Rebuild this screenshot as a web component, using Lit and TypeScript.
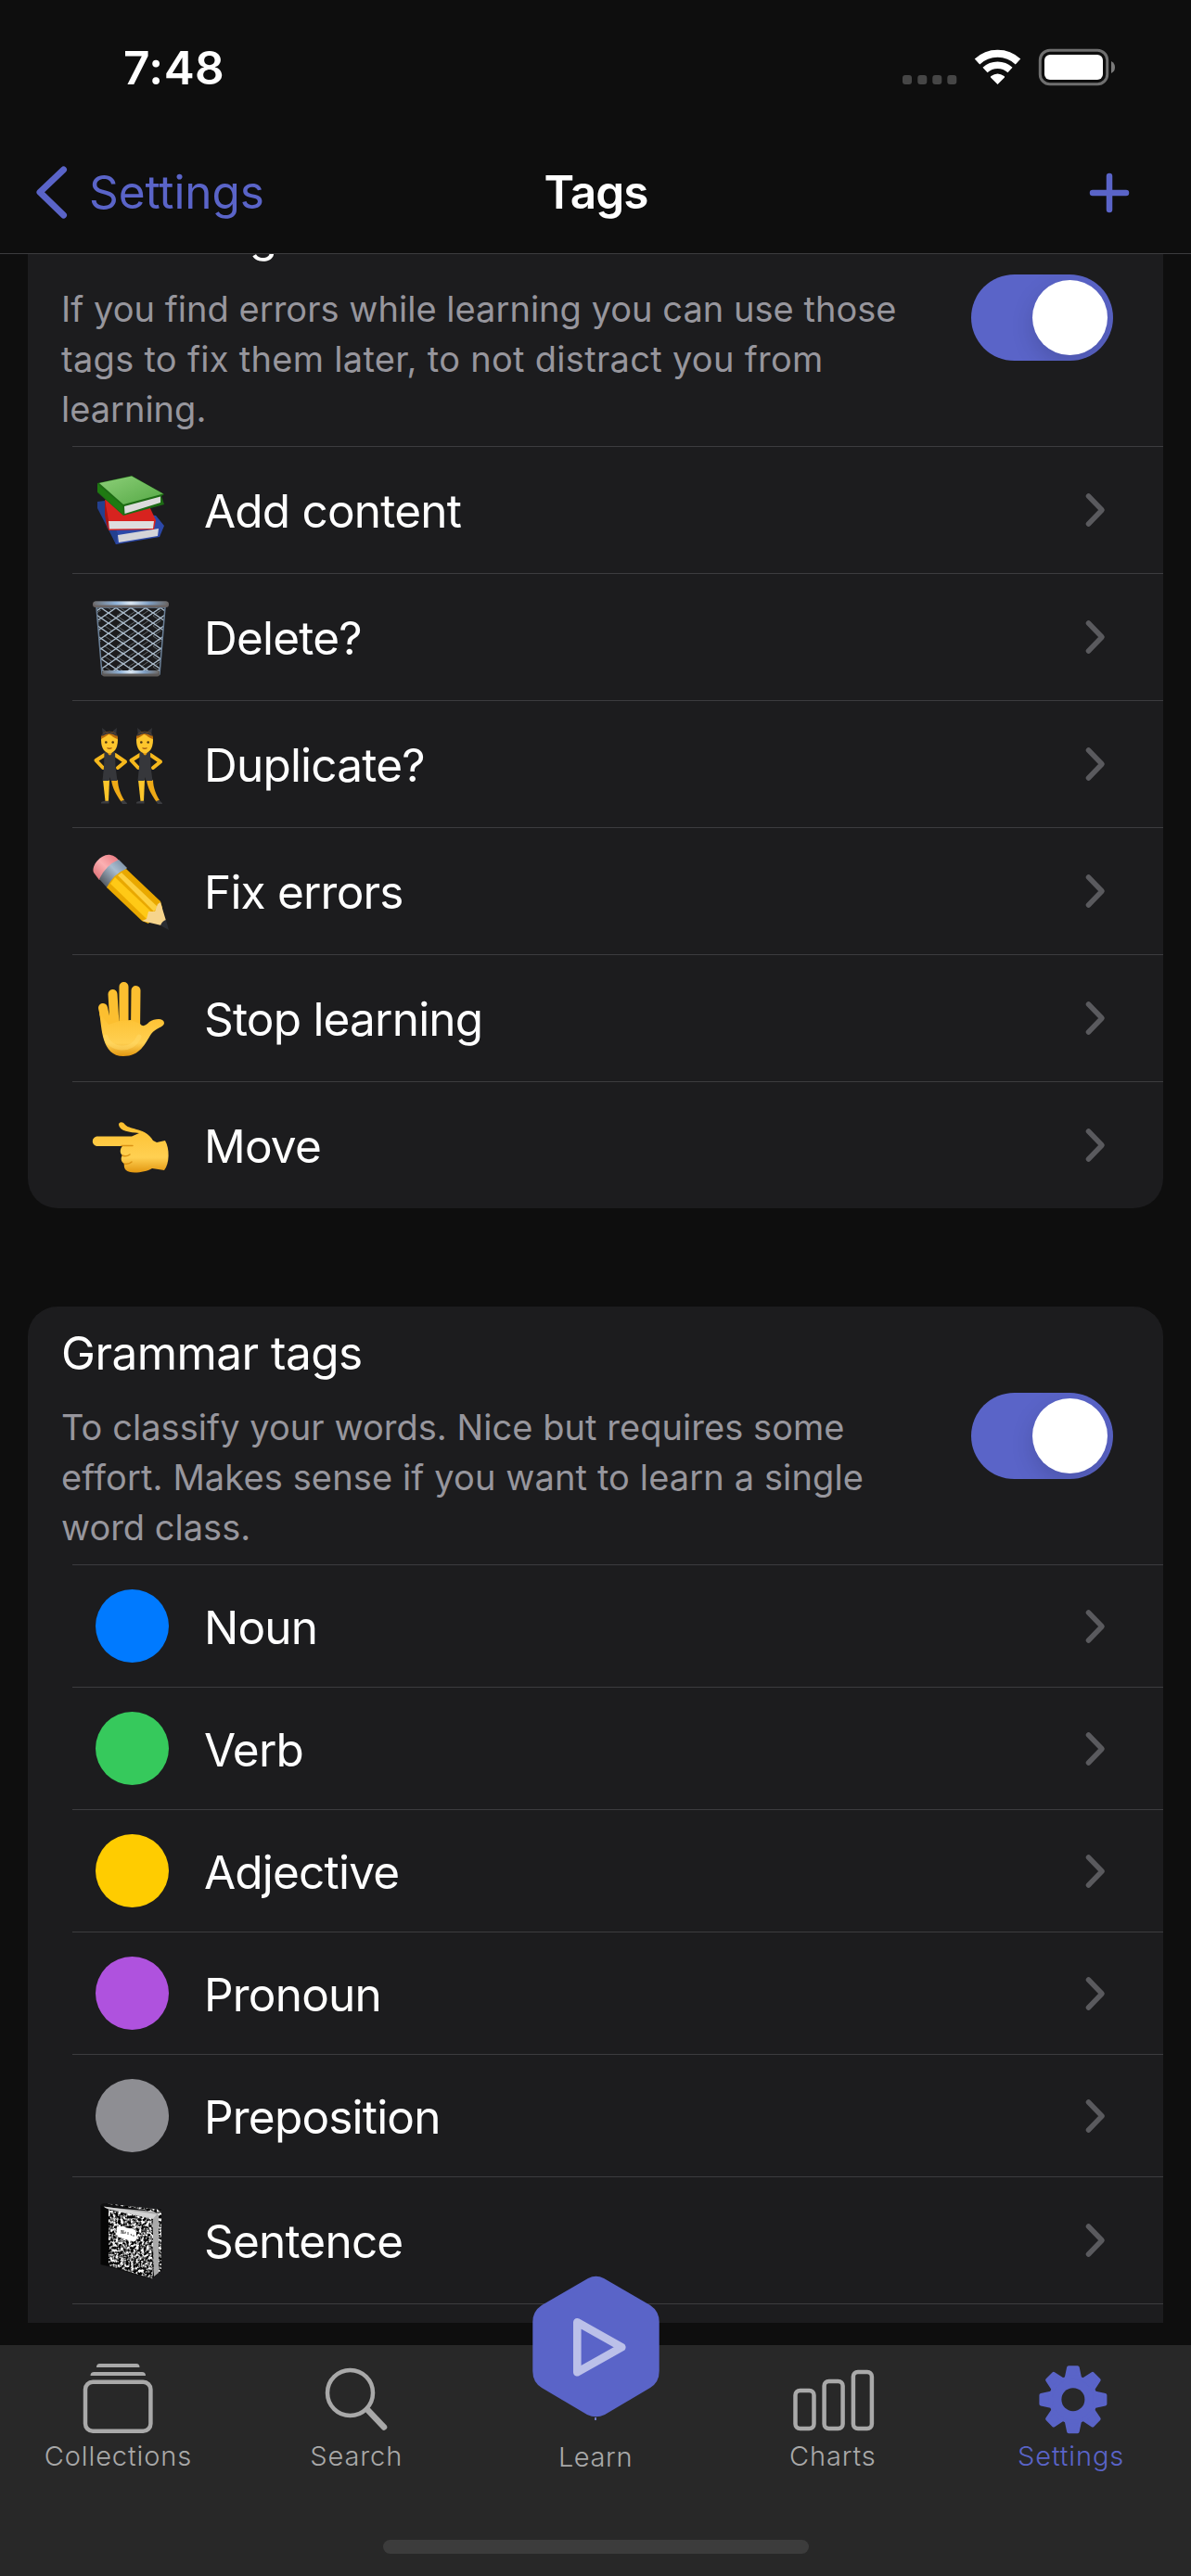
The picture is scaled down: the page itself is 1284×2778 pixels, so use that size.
import { LitElement, html, svg, css, nothing, type TemplateResult } from "lit";
import { customElement, property } from "lit/decorators.js";

const books = svg`
  <path d="M5 31 L25 77 L72 69 L77 57 L68 46 L20 40 Z" fill="#2c48a8"/>
  <path d="M5 31 L13 30 L27 66 L25 77 L5 38 Z" fill="#24408f"/>
  <path d="M27 67 L71 60 L70 68 L28 75 Z" fill="#d4d4d8"/>
  <path d="M13 29 L60 34 L68 51 L66 61 L17 62 Z" fill="#d8231f"/>
  <path d="M17 52 L66 52 L65 60 L18 60.5 Z" fill="#dedede"/>
  <path d="M13 29 L17 51 L16 61 L13 46 Z" fill="#a81512"/>
  <path d="M5 11 L42 3 L77 23 L74 25 L77 34 L33 46 L5 21 Z" fill="#1d6b14"/>
  <path d="M7 11 L42 3.5 L76 22.5 L33 34 Z" fill="url(#book-green)"/>
  <path d="M5 12 L32 35 L33 45 L5 20 Z" fill="#1f7a12"/>
  <path d="M34 36 L73 25.5 L73 32 L34.500 44 Z" fill="#dcdcdc"/>
  <defs><linearGradient id="book-green" x1="0" y1="0" x2="1" y2="1">
    <stop offset="0" stop-color="#8ccf78"/><stop offset="1" stop-color="#55a845"/>
  </linearGradient></defs>`;

const basket = svg`
  <defs>
    <pattern id="wire" width="16" height="11" patternUnits="userSpaceOnUse" patternTransform="translate(1 3)">
      <path d="M0 0 L16 11 M16 0 L0 11" stroke="#aebfcf" stroke-width="1.35"/>
    </pattern>
    <pattern id="wire-back" width="13" height="11" patternUnits="userSpaceOnUse">
      <path d="M0 6 L13 -3 M0 6 L13 15" stroke="#5e6468" stroke-width="1"/>
    </pattern>
    <linearGradient id="rim" x1="0" x2="1">
      <stop offset="0" stop-color="#6e6f73"/><stop offset=".3" stop-color="#8fb2d8"/>
      <stop offset=".5" stop-color="#dbe7f2"/><stop offset=".75" stop-color="#7f9fc4"/><stop offset="1" stop-color="#6b6866"/>
    </linearGradient>
  </defs>
  <path d="M4 8 L10 80 H72 L78 8 Z" fill="url(#wire-back)"/>
  <path d="M4 8 L10 80 H72 L78 8 Z" fill="url(#wire)" stroke="#6a7f96" stroke-width="1.5"/>
  <rect x="0" y="1.500" width="82" height="6.500" rx="3" fill="#6a6464"/>
  <rect x="1" y="1.500" width="80" height="4" rx="2" fill="url(#rim)"/>
  <rect x="10" y="76" width="62" height="6.500" rx="2.500" fill="#5d5a59"/>
  <rect x="11" y="76" width="60" height="3.500" rx="1.500" fill="url(#rim)"/>`;

const dancer = svg`
  <path d="M10 1 L14 4 L15 11 L11 10 Z M26 1 L22 4 L21 11 L25 10 Z" fill="#333438"/>
  <path d="M13 30 L3.500 36 L11 44 M24 30 L35 37.500 L27 44" fill="none" stroke="#f5b81d" stroke-width="4" stroke-linecap="round" stroke-linejoin="round"/>
  <path d="M11 57 L18 57 L17 80 L13.500 80 Z" fill="#fcc62b"/>
  <path d="M20 57 L27 57 C27 66 31 74 34 79 L30.500 80.500 C26 74 21 66 20 57 Z" fill="#eea916"/>
  <path d="M9 82 C9 80 12 80 17.500 79.500 V82.500 H9 Z M30 80 L34 79 C35 81 37 81 37 83 H32 Z" fill="#3c3d41"/>
  <path d="M15 26 H21 V31 H15 Z" fill="#e39a10"/>
  <path d="M12.500 27 L15.500 27 Q18.500 34 21 27 L24 27 L24.500 43 L26.500 58 H19.500 L18.500 54 L17.500 58 H10.500 L12 43 Z" fill="#36373b"/>
  <path d="M9 14 C9 3 27 3 27 14 C27 33 9 33 9 14 Z" fill="#fdc62d"/>
  <path d="M9 13 C8 2 28 2 27 13 C22 12 20 8 17 8 C15 10 12 11 9 13 Z" fill="#b96c0c"/>
  <path d="M10 9 Q18 3 26 9" fill="none" stroke="#35353a" stroke-width="2"/>
  <circle cx="14.300" cy="16.500" r="1.300" fill="#4d3411"/><circle cx="21.700" cy="16.500" r="1.300" fill="#4d3411"/>
  <path d="M15.500 22.500 Q18 24 20.500 22.500" fill="none" stroke="#a65d10" stroke-width="1.300"/>`;

const dancers = svg`<g>${dancer}</g><g transform="translate(38 0)">${dancer}</g>`;

const pencil = svg`
  <defs>
    <linearGradient id="ferrule" x1="1" y1="0" x2="0" y2="1">
      <stop offset="0" stop-color="#6e8298"/><stop offset=".4" stop-color="#a9bdd0"/><stop offset="1" stop-color="#3c3c40"/>
    </linearGradient>
    <linearGradient id="eraser" x1="1" y1="0" x2="0" y2="1">
      <stop offset="0" stop-color="#e87079"/><stop offset=".5" stop-color="#fbb0b2"/><stop offset="1" stop-color="#d9656c"/>
    </linearGradient>
  </defs>
  <path d="M7 28 L1 20 C-2 12 10 -1 19 1 Q25 2 29 8 Z" fill="url(#eraser)"/>
  <path d="M7 27 Q14 12 28 6 L37 15 L16 37 Z" fill="url(#ferrule)"/>
  <path d="M15 36 Q23 21 36 16 L73 51 L75 58 L60 75 L53 72 Z" fill="#e9a800"/>
  <path d="M19 32 L24 25 L66 65 L58 70 Z" fill="#ffc916"/>
  <path d="M27 23 L31 20 L70 57 L66 62 Z" fill="#fdd040"/>
  <path d="M53 72 L58 70 L60 62 L67 62 L70 54 L73 52 L79 72 L74 77 Z" fill="#f6d48c"/>
  <path d="M73 77 Q75 72 79 71 L82 82 Z" fill="#292c33"/>`;

const skin = svg`
  <defs><linearGradient id="skin" x1="0" y1="0" x2="0" y2="1">
    <stop offset="0" stop-color="#fdbf2d"/><stop offset=".7" stop-color="#ffd052"/><stop offset="1" stop-color="#e29711"/>
  </linearGradient></defs>`;

const palm = svg`${skin}
  <path d="M11 29 L17 56 M21.500 14 L24 54 M33.500 6 V54 M46.500 10 L46 54" stroke="#fcbf30" stroke-width="10" stroke-linecap="round"/>
  <path d="M7 34 C10 50 9 81 33 81 C51 81 56 68 63 57 C68 50 77 50 77 45 C76 39 66 41 61 44 C57 48 54 50 51 46 L41 42 L29 43 L17 47 Z" fill="url(#skin)"/>
  <path d="M14 60 C18 74 42 78 50 60" fill="none" stroke="#ffda68" stroke-width="5" stroke-linecap="round" opacity=".5"/>`;

const pointLeft = svg`${skin}
  <path d="M5.500 30.500 H42 L50 27 C40 26 29 25 28 18 C28 15 32 14 35 18 C41 24 57 21 65 35 L69 37 L78 35 C83 43 83 60 77 67 L64 65 C56 70 39 71 36 67 C33 64 34 61 34 60 C30 58 30 53 32 51 C29 49 29 44 32 41 L5.500 41 C-2 41 -2 30.500 5.500 30.500 Z" fill="url(#skin)"/>
  <path d="M31 40.500 H43 M32 51 Q36 53 40 50 M34 60 Q39 61 42 58" fill="none" stroke="#dc9314" stroke-width="1.500" stroke-linecap="round"/>`;

const notebook = svg`
  <defs><filter id="marble" x="0" y="0" width="1" height="1" color-interpolation-filters="sRGB">
    <feTurbulence type="fractalNoise" baseFrequency=".36" numOctaves="2" seed="4"/>
    <feColorMatrix values="3.400 0 0 0 -1.280  3.400 0 0 0 -1.280  3.400 0 0 0 -1.280  0 0 0 0 1"/>
    <feComposite in2="SourceGraphic" operator="in"/>
  </filter></defs>
  <path d="M8 3 Q9 0 13 0 L74 8 V72 L64 82 L8 66 Z" fill="#101011"/>
  <path d="M12 0 L74 7 V73 L66 76 L60 8 Z" filter="url(#marble)" fill="#777"/>
  <path d="M12 4 L66 9 L71 12 V75 L66 79 L64 15 Z" fill="#a9a9a9"/>
  <path d="M12 3.500 L69 12 L64 18 L14 7 Z" fill="#d2d2d2"/>
  <path d="M17 6.500 L65 17 L64.500 81.500 L17 67 Z" filter="url(#marble)" fill="#777"/>
  <path d="M9 3 L17 6.500 V67.500 L9 66 Z" fill="#060606"/>
  <path d="M26 27 Q26 24 30 25 L44 28 Q47 29 47 32 V38 Q47 42 43 41 L29 37 Q26 36 26 33 Z" fill="#fff"/>
  <path d="M31 33 V29 L33 33 V29 M35 33 Q34 31 36 31 M38 31 V34 M41 33 L42 35 M43 35 L45 35" fill="none" stroke="#555" stroke-width="1"/>`;

const emojiArt: Record<string, TemplateResult<2>> = {
  books, basket, dancers, pencil, palm, pointLeft, notebook,
};

interface Tag {
  label: string;
  art?: string;
  color?: string;
}

interface NoteLine {
  text: string;
  tracking: number;
}

interface TagSection {
  title: string;
  note: NoteLine[];
  tags: Tag[];
}

const sections: TagSection[] = [
  {
    title: "Action tags",
    note: [
      { text: "If you find errors while learning you can use those", tracking: 0.03 },
      { text: "tags to fix them later, to not distract you from", tracking: 0.3 },
      { text: "learning.", tracking: 0 },
    ],
    tags: [
      { label: "Add content", art: "books" },
      { label: "Delete?", art: "basket" },
      { label: "Duplicate?", art: "dancers" },
      { label: "Fix errors", art: "pencil" },
      { label: "Stop learning", art: "palm" },
      { label: "Move", art: "pointLeft" },
    ],
  },
  {
    title: "Grammar tags",
    note: [
      { text: "To classify your words. Nice but requires some", tracking: 0.05 },
      { text: "effort. Makes sense if you want to learn a single", tracking: 0.12 },
      { text: "word class.", tracking: 0 },
    ],
    tags: [
      { label: "Noun", color: "#007aff" },
      { label: "Verb", color: "#36c95c" },
      { label: "Adjective", color: "#ffcc00" },
      { label: "Pronoun", color: "#af52de" },
      { label: "Preposition", color: "#8e8e93" },
      { label: "Sentence", art: "notebook" },
    ],
  },
];

@customElement("status-bar")
class StatusBar extends LitElement {
  static styles = css`
    :host { display: flex; justify-content: space-between; height: 144px; padding: 0 81px 0 133px; box-sizing: border-box; }
    .time { margin-top: 43px; font-size: 49.5px; line-height: 60px; font-weight: 600; color: #fff; letter-spacing: 0.5px; }
    .indicators { width: 232px; height: 48px; margin-top: 50px; display: block; }
  `;
  render() {
    return html`
      <span class="time">7:48</span>
      <svg class="indicators" viewBox="971 50 232 48">
        ${[973, 989.3, 1005.3, 1021.3].map((x) => svg`<rect x=${x} y="81" width="10" height="10" rx="3" fill="#464646"/>`)}
        <g fill="none" stroke="#fff">
          <path d="M1053.500 66.500 A32 32 0 0 1 1097.500 66.500" stroke-width="8"/>
          <path d="M1062 75.500 A20 20 0 0 1 1089 75.500" stroke-width="7.500"/>
        </g>
        <path d="M1075.500 91 L1068 83.500 Q1067.500 82.500 1068.500 82 Q1075.500 77 1082.500 82 Q1083.500 82.500 1083 83.500 Z" fill="#fff"/>
        <rect x="1121.300" y="54.300" width="72.400" height="36.400" rx="10.500" fill="none" stroke="#6f6f6f" stroke-width="3"/>
        <rect x="1126" y="59" width="63" height="27" rx="6" fill="#fff"/>
        <path d="M1198 66 Q1202 68 1202 72.500 Q1202 77 1198 79 Z" fill="#7a7a7a"/>
      </svg>`;
  }
}

@customElement("nav-bar")
class NavBar extends LitElement {
  static styles = css`
    :host { display: grid; grid-template-columns: 1fr auto 1fr; align-items: start; height: 130px; box-sizing: border-box; padding: 0 66px 0 38px; border-bottom: 1px solid #3c3c3e; font-size: 49.5px; line-height: 60px; }
    .back { display: flex; align-items: flex-start; gap: 22px; color: #5a64c8; padding-top: 33px; letter-spacing: -0.1px; }
    .arrow { width: 36px; height: 60px; }
    .title { color: #fff; font-weight: 600; padding-top: 33px; margin-right: -29px; letter-spacing: -0.9px; }
    .add { justify-self: end; width: 44px; height: 44px; margin-top: 42px; }
  `;
  render() {
    return html`
      <div class="back">
        <svg class="arrow" viewBox="0 0 36 60"><path d="M30.500 6 L5 30.300 L30.500 55" fill="none" stroke="#5a64c8" stroke-width="7" stroke-linecap="round" stroke-linejoin="round"/></svg>
        <span class="back-label">Settings</span>
      </div>
      <div class="title">Tags</div>
      <svg class="add" viewBox="0 0 44 44"><path d="M22 4 V40 M4 22 H40" stroke="#5a64c8" stroke-width="6.500" stroke-linecap="round"/></svg>`;
  }
}

@customElement("tag-row")
class TagRow extends LitElement {
  @property({ attribute: false }) tag!: Tag;
  static styles = css`
    :host { display: flex; align-items: center; border-top: 1px solid #3c3c3f; margin-left: 48px; padding: 0 61px 0 22px; }
    .icon { width: 82px; height: 82px; display: block; flex: none; margin-top: 2px; overflow: visible; }
    .dot { width: 79px; height: 79px; margin: 0 0 0 3px; border-radius: 50%; flex: none; }
    .label { flex: 1; margin-left: 38px; padding-top: 1px; font-size: 49.5px; line-height: 60px; color: #fff; letter-spacing: -0.8px; }
    .dot + .label { padding-top: 3px; }
    .chevron { width: 24px; height: 40px; display: block; }
  `;
  render() {
    const { label, art, color } = this.tag;
    return html`
      ${art ? html`<svg class="icon" viewBox="0 0 82 82">${emojiArt[art]}</svg>` : nothing}
      ${color ? html`<span class="dot" style="background:${color}"></span>` : nothing}
      <span class="label">${label}</span>
      <svg class="chevron" viewBox="0 0 24 40"><path d="M4.500 5 L19 20 L4.500 35" fill="none" stroke="#5a5a5e" stroke-width="5.500" stroke-linecap="round" stroke-linejoin="round"/></svg>`;
  }
}

@customElement("tag-card")
class TagCard extends LitElement {
  @property({ attribute: false }) section!: TagSection;
  static styles = css`
    :host { display: block; background: #1c1c1e; border-radius: 32px; flex: none; }
    .head { display: flex; justify-content: space-between; align-items: center; height: 278px; box-sizing: border-box; padding: 0 54px 0 36px; }
    .text { margin-top: 7px; }
    .title { font-size: 49.5px; line-height: 60px; color: #fff; letter-spacing: -0.55px; }
    .note { margin-top: 23px; font-size: 38px; line-height: 54px; color: #97969d; white-space: nowrap; }
    .toggle { width: 153px; height: 93px; border-radius: 47px; background: #5a64c8; display: flex; justify-content: flex-end; padding: 6px; box-sizing: border-box; overflow: hidden; }
    .knob { width: 81px; height: 81px; border-radius: 50%; background: #fff; box-shadow: 0 9px 24px rgba(0, 0, 0, 0.15); }
    .row { height: 137px; box-sizing: border-box; }
    .row.dotted { height: 132px; }
  `;
  render() {
    const { title, note, tags } = this.section;
    return html`
      <div class="head">
        <div class="text">
          <div class="title">${title}</div>
          <div class="note">${note.map((line) => html`<div style="letter-spacing:${line.tracking}px">${line.text}</div>`)}</div>
        </div>
        <div class="toggle"><div class="knob"></div></div>
      </div>
      ${tags.map((tag) => html`<tag-row class="row ${tag.color ? "dotted" : ""}" .tag=${tag}></tag-row>`)}
      <slot></slot>`;
  }
}

const gearTeeth = [0, 45, 90, 135, 180, 225, 270, 315];

const tabs = [
  {
    label: "Collections",
    icon: svg`<g fill="none" stroke="currentColor" stroke-width="4.500"><rect x="2" y="22.800" width="70.400" height="53" rx="8"/></g>
      <path d="M7.500 16 Q7.500 12 11.500 12 H63 Q67 12 67 16 Z M14 7 Q14 3 17.500 3 H57 Q60.500 3 60.500 7 Z" fill="currentColor"/>`,
  },
  {
    label: "Search",
    icon: svg`<circle cx="30.500" cy="34.500" r="24.500" fill="none" stroke="currentColor" stroke-width="4.500"/>
      <path d="M49 52.500 L67 71.500" stroke="currentColor" stroke-width="6.500" stroke-linecap="round"/>`,
  },
  { label: "Learn", icon: nothing },
  {
    label: "Charts",
    icon: svg`<g fill="none" stroke="currentColor" stroke-width="4.500">
      <rect x="-3.500" y="32" width="20" height="41" rx="5"/><rect x="27.600" y="22" width="20" height="51" rx="5"/><rect x="58.900" y="12" width="20" height="61" rx="5"/></g>`,
  },
  {
    label: "Settings",
    icon: svg`<g fill="currentColor" stroke="currentColor" stroke-width="4" stroke-linejoin="round" transform="translate(38.900 41.700)">
      <circle r="24"/>${gearTeeth.map((a) => svg`<path d="M-4.800 -34.500 L4.800 -34.500 L7 -24 L-7 -24 Z" transform="rotate(${a})"/>`)}
      <circle r="12.500" fill="#282828" stroke="none"/></g>`,
  },
];

@customElement("tab-bar")
class TabBar extends LitElement {
  static styles = css`
    :host { display: flex; flex-direction: column; align-items: center; justify-content: space-between; height: 249px; background: #282828; position: relative; box-sizing: border-box; padding-bottom: 24px; }
    .tabs { display: grid; grid-template-columns: repeat(5, 1fr); width: 100%; }
    .tab { display: flex; flex-direction: column; align-items: center; padding-top: 17px; color: #a9a9a9; }
    .tab.active { color: #5a64c8; }
    .glyph { width: 76px; height: 82px; display: block; overflow: visible; }
    .name { margin: 3px 2px 0 0; font-size: 29px; line-height: 36px; font-weight: 300; letter-spacing: 0.9px; }
    .learn { padding-top: 18px; }
    .learn .name { margin-right: 0; letter-spacing: 0.6px; }
    .play { position: absolute; left: 572px; top: -76px; width: 142px; height: 160px; }
    .home { width: 459px; height: 15px; border-radius: 8px; background: #3c3c3c; }
  `;
  render() {
    return html`
      <div class="tabs">
        ${tabs.map((t) => html`<div class="tab ${t.label === "Settings" ? "active" : t.label === "Learn" ? "learn" : ""}">
          <svg class="glyph" viewBox="0 0 76 82">${t.icon}</svg>
          <span class="name">${t.label}</span>
        </div>`)}
      </div>
      <svg class="play" viewBox="572 2453 142 160">
        <path d="M634 2457 Q642.500 2452.500 651 2457 L701 2486 Q710.700 2492.500 710.700 2504 V2557 Q710.700 2569 701 2575 L652 2604 Q642.500 2608.500 633 2604 L584 2575 Q574.300 2569 574.300 2557 V2504 Q574.300 2492.500 584 2486 Z" fill="#5a64c8"/>
        <path d="M622.300 2504.300 L670.300 2531.300 L622.300 2558.300 Z" fill="none" stroke="#bbc0e9" stroke-width="8.600" stroke-linejoin="round"/>
        <rect x="641" y="2607" width="2" height="3" fill="#7078c0"/>
      </svg>
      <div class="home"></div>`;
  }
}

@customElement("app-root")
class AppRoot extends LitElement {
  static styles = css`
    :host { display: flex; flex-direction: column; width: 1284px; height: 2778px; overflow: hidden; background: #0e0e0e; font-family: Inter, "Liberation Sans", sans-serif; }
    .scroll { flex: 1; min-height: 0; overflow: hidden; margin-bottom: 24px; padding: 0 30px; }
    .sheet { display: flex; flex-direction: column; gap: 106px; margin-top: -71px; }
    .tail { margin-left: 48px; height: 80px; border-top: 1px solid #3c3c3f; }
  `;
  render() {
    return html`
      <status-bar></status-bar>
      <nav-bar></nav-bar>
      <div class="scroll"><div class="sheet">
        ${sections.map((s, i) => html`<tag-card .section=${s}>${i === 1 ? html`<div class="tail"></div>` : nothing}</tag-card>`)}
      </div></div>
      <tab-bar></tab-bar>`;
  }
}
